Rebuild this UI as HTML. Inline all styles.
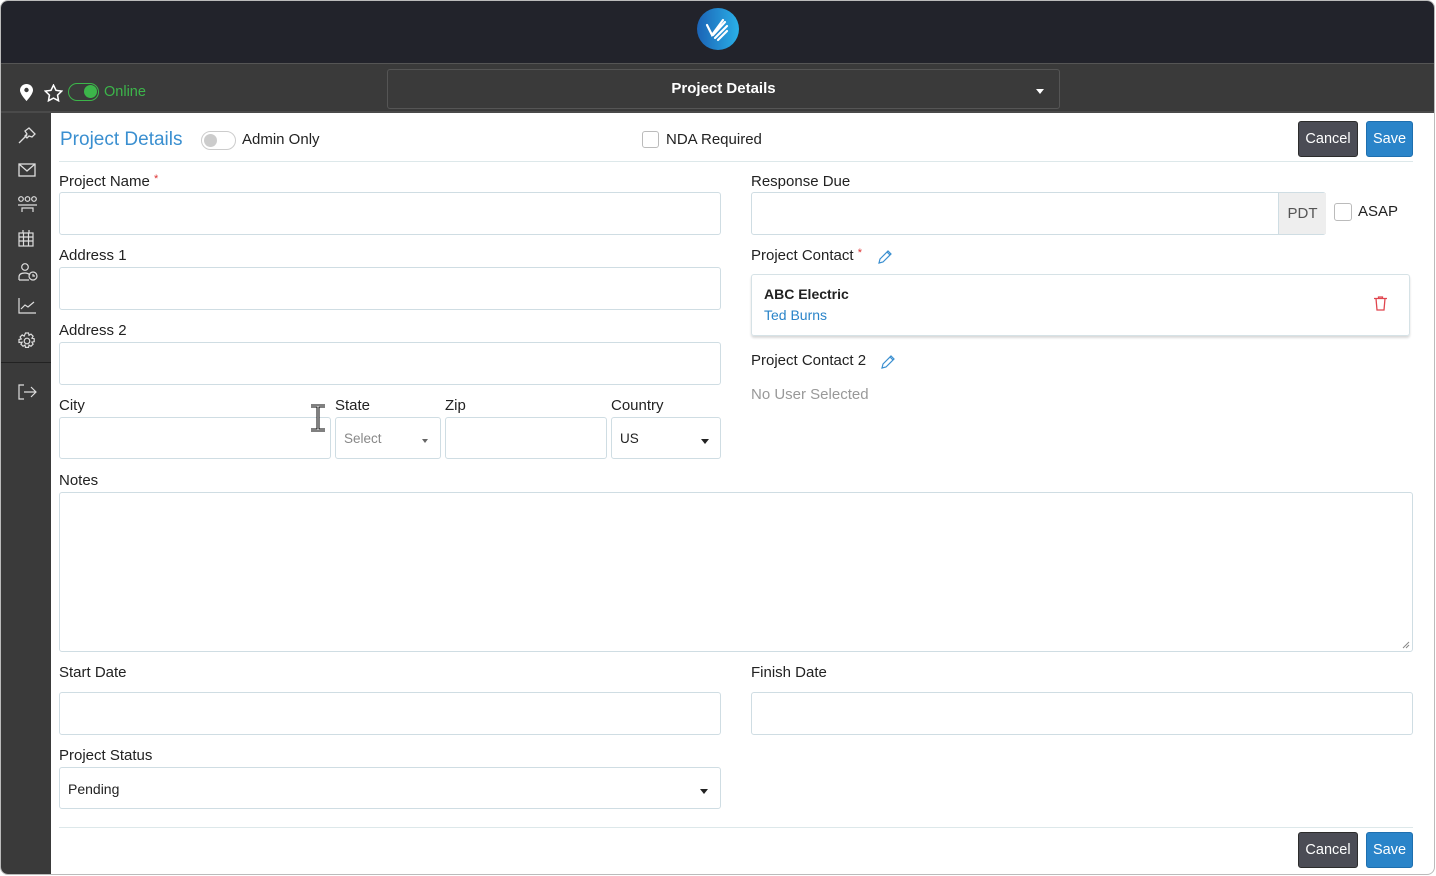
<!DOCTYPE html>
<html><head><style>
*{box-sizing:border-box;margin:0;padding:0}
body{width:1436px;height:876px;background:#fff;font-family:"Liberation Sans",sans-serif;color:#222;position:relative;overflow:hidden}
.frame{position:absolute;left:0;top:0;width:1435px;height:875px;border-radius:8px;overflow:hidden;background:#fff;border:1px solid #bbb}
.top{position:absolute;left:0;top:0;right:0;height:62px;background:#22232b}
.bar{position:absolute;left:0;top:62px;right:0;height:50px;background:#3a3a3a;border-top:1px solid #555;border-bottom:2px solid #4a4a4a}
.side{position:absolute;left:0;top:112px;width:50px;bottom:0;background:#3a3a3a}
.a{position:absolute}
.lbl{position:absolute;font-size:15px;color:#222}
.in{position:absolute;border:1px solid #cfdde3;border-radius:3px;background:#fff}
.btn{position:absolute;height:36px;border-radius:3px;color:#fff;font-size:14.5px;display:flex;align-items:center;justify-content:center}
.cancel{background:#4b4c55;border:1px solid #2c2c2c}
.save{background:#2a84c9;border:1px solid #1e6faf}
.caret{position:absolute;width:0;height:0;border-left:4px solid transparent;border-right:4px solid transparent;border-top:5px solid #222}
.ic{position:absolute;left:17px}
</style></head><body>
<div class="frame">
<div class="top">
<svg class="a" style="left:695px;top:6px" width="44" height="44" viewBox="0 0 44 44"><defs><linearGradient id="g" x1="0" x2="1"><stop offset="0" stop-color="#1b63b5"/><stop offset="1" stop-color="#2ab0e8"/></linearGradient></defs><circle cx="22" cy="22" r="21" fill="url(#g)"/><path d="M11 18l5 10 11-15M17 28l12-13M19 31l12-12M22 33l9-9" stroke="#fff" stroke-width="2.2" fill="none" stroke-linecap="round"/></svg>
</div>
<div class="bar">
<svg class="a" style="left:19px;top:20px" width="13" height="17" viewBox="0 0 13 17"><path d="M6.5 0C3 0 0 2.7 0 6.2 0 10 6.5 17 6.5 17S13 10 13 6.2C13 2.7 10 0 6.5 0z" fill="#fff"/><circle cx="6.5" cy="6" r="2.2" fill="#3a3a3a"/></svg>
<svg class="a" style="left:43px;top:20px" width="19" height="18" viewBox="0 0 24 23"><path d="M12 1.5l3.2 6.6 7.2 1-5.2 5.1 1.2 7.2L12 18l-6.4 3.4 1.2-7.2L1.6 9.1l7.2-1z" fill="none" stroke="#fff" stroke-width="2"/></svg>
<div class="a" style="left:67px;top:19px;width:31px;height:18px;border:1.5px solid #3cb54a;border-radius:9px"><div class="a" style="right:1px;top:1px;width:13px;height:13px;border-radius:50%;background:#3cb54a"></div></div>
<div class="a" style="left:103px;top:20px;color:#3cb54a;font-size:14.5px">Online</div>
<div class="a" style="left:386px;top:5px;width:673px;height:40px;border:1px solid #555;border-radius:3px;background:#3a3a3a;color:#fff;font-size:15px;font-weight:bold;text-align:center;line-height:38px">Project Details<div class="caret" style="right:15px;top:19px;border-top-color:#fff"></div></div>
</div>
<div class="side">
<svg class="ic" style="top:14px" width="18" height="18" viewBox="0 0 18 18" fill="none" stroke="#ddd" stroke-width="1.3"><path d="M1 16l8-8M7 4l4-3 6 6-3 3-3-1-2 2-2-2 2-2z"/></svg>
<svg class="ic" style="top:50px" width="18" height="14" viewBox="0 0 18 14" fill="none" stroke="#ddd" stroke-width="1.3"><rect x="1" y="1" width="16" height="12"/><path d="M1 1l8 7 8-7"/></svg>
<svg class="ic" style="left:16px;top:82px" width="21" height="18" viewBox="0 0 21 18" fill="none" stroke="#ddd" stroke-width="1.2"><circle cx="4" cy="4" r="2.3"/><circle cx="10.5" cy="4" r="2.3"/><circle cx="17" cy="4" r="2.3"/><path d="M1 10h19M5 17v-4h11v4"/></svg>
<svg class="ic" style="top:117px" width="16" height="17" viewBox="0 0 16 17" fill="none" stroke="#ddd" stroke-width="1.2"><rect x="1" y="3" width="14" height="13"/><path d="M1 7h14M1 11h14M5.5 3v13M10.5 3v13M5 0v3M11 0v3"/></svg>
<svg class="ic" style="top:150px" width="20" height="18" viewBox="0 0 20 18" fill="none" stroke="#ddd" stroke-width="1.2"><circle cx="7" cy="4" r="3.3"/><path d="M1 17v-3c0-3 3-4 6-4s4 1 5 2M1 17h10"/><circle cx="15" cy="13" r="4"/><path d="M15 11v2h2"/></svg>
<svg class="ic" style="top:185px" width="18" height="16" viewBox="0 0 18 16" fill="none" stroke="#ddd" stroke-width="1.2"><path d="M1 0v15h17M3 11l4-4 3 2 6-5"/></svg>
<svg class="ic" style="top:219px" width="18" height="18" viewBox="0 0 18 18" fill="none" stroke="#ddd" stroke-width="1.2"><circle cx="9" cy="9" r="2.8"/><path d="M7.5 1h3l.5 2.3 2-1.2 2.1 2.1-1.2 2 2.3.5v3l-2.3.5 1.2 2-2.1 2.1-2-1.2-.5 2.3h-3l-.5-2.3-2 1.2-2.1-2.1 1.2-2L1 10.5v-3l2.3-.5-1.2-2 2.1-2.1 2 1.2z"/></svg>
<div class="a" style="left:0;top:249px;width:50px;height:1px;background:#222"></div>
<svg class="ic" style="top:271px" width="19" height="16" viewBox="0 0 19 16" fill="none" stroke="#ddd" stroke-width="1.2"><path d="M6 1H1v14h5M6 8h12M13 3l5 5-5 5"/></svg>
</div>

<div class="a" style="left:59px;top:128px;font-size:19px;color:#3a8fd0">Project Details</div>
<div class="a" style="left:200px;top:130px;width:35px;height:19px;border:1px solid #ccc;border-radius:10px"><div class="a" style="left:2px;top:2px;width:13px;height:13px;border-radius:50%;background:#ccc"></div></div>
<div class="lbl" style="left:241px;top:130px">Admin Only</div>
<div class="a" style="left:641px;top:130px;width:17px;height:17px;border:1px solid #bbb;border-radius:3px"></div>
<div class="lbl" style="left:665px;top:130px">NDA Required</div>
<div class="btn cancel" style="left:1297px;top:120px;width:60px">Cancel</div>
<div class="btn save" style="left:1365px;top:120px;width:47px">Save</div>
<div class="a" style="left:58px;top:160px;width:1354px;height:1px;background:#dde8ea"></div>

<div class="lbl" style="left:58px;top:172px">Project Name <span style="color:#d33;font-size:11px;vertical-align:top">*</span></div>
<div class="in" style="left:58px;top:191px;width:662px;height:43px"></div>
<div class="lbl" style="left:58px;top:246px">Address 1</div>
<div class="in" style="left:58px;top:266px;width:662px;height:43px"></div>
<div class="lbl" style="left:58px;top:321px">Address 2</div>
<div class="in" style="left:58px;top:341px;width:662px;height:43px"></div>
<div class="lbl" style="left:58px;top:396px">City</div>
<div class="lbl" style="left:334px;top:396px">State</div>
<div class="lbl" style="left:444px;top:396px">Zip</div>
<div class="lbl" style="left:610px;top:396px">Country</div>
<div class="in" style="left:58px;top:416px;width:272px;height:42px"></div>
<div class="in" style="left:334px;top:416px;width:106px;height:42px"><span class="a" style="left:8px;top:13px;font-size:13.5px;color:#888">Select</span><div class="caret" style="left:86px;top:21px;border-top-color:#666;border-width:4px 3.5px 0"></div></div>
<div class="in" style="left:444px;top:416px;width:162px;height:42px"></div>
<div class="in" style="left:610px;top:416px;width:110px;height:42px"><span class="a" style="left:8px;top:13px;font-size:13.5px;color:#222">US</span><div class="caret" style="left:89px;top:21px"></div></div>
<svg class="a" style="left:308px;top:403px" width="18" height="28" viewBox="0 0 18 28"><path d="M2 2h14M2 26h14M9 2v24" stroke="#000" stroke-width="3"/><path d="M2 2h14M2 26h14M9 2v24" stroke="#fff" stroke-width="1"/></svg>
<div class="lbl" style="left:58px;top:471px">Notes</div>
<div class="in" style="left:58px;top:491px;width:1354px;height:160px"><svg class="a" style="right:2px;bottom:2px" width="8" height="8"><path d="M1 7l6-6M4 7l3-3" stroke="#888"/></svg></div>
<div class="lbl" style="left:58px;top:663px">Start Date</div>
<div class="in" style="left:58px;top:691px;width:662px;height:43px"></div>
<div class="lbl" style="left:58px;top:746px">Project Status</div>
<div class="in" style="left:58px;top:766px;width:662px;height:42px"><span class="a" style="left:8px;top:13px;font-size:14px">Pending</span><div class="caret" style="left:640px;top:21px"></div></div>
<div class="lbl" style="left:750px;top:663px">Finish Date</div>
<div class="in" style="left:750px;top:691px;width:662px;height:43px"></div>

<div class="lbl" style="left:750px;top:172px">Response Due</div>
<div class="in" style="left:750px;top:191px;width:575px;height:43px"><div class="a" style="left:526px;top:0;width:48px;height:41px;background:#eee;border-left:1px solid #cfdde3;font-size:15px;color:#555;text-align:center;line-height:42px">PDT</div></div>
<div class="a" style="left:1333px;top:202px;width:18px;height:18px;border:1px solid #bbb;border-radius:3px"></div>
<div class="lbl" style="left:1357px;top:202px">ASAP</div>
<div class="lbl" style="left:750px;top:246px">Project Contact <span style="color:#d33;font-size:11px;vertical-align:top">*</span></div>
<svg class="a" style="left:877px;top:248px" width="15" height="15" viewBox="0 0 15 15" fill="none" stroke="#3a8fd0" stroke-width="1.2"><path d="M1 14l1-4 8-8 3 3-8 8zM9 3l3 3"/></svg>
<div class="a" style="left:750px;top:273px;width:659px;height:62px;border:1px solid #d6e2e6;border-radius:3px;box-shadow:0 2px 2px rgba(0,0,0,.15)"></div>
<div class="a" style="left:763px;top:285px;font-size:14px;font-weight:bold">ABC Electric</div>
<div class="a" style="left:763px;top:306px;font-size:14px;color:#2a84c9">Ted Burns</div>
<svg class="a" style="left:1373px;top:295px" width="13" height="15" viewBox="0 0 13 15" fill="none" stroke="#e0454e" stroke-width="1.3"><path d="M0 2.5h13M4.5 2.5V1h4v1.5M2 2.5l1 11.5h7l1-11.5"/></svg>
<div class="lbl" style="left:750px;top:351px">Project Contact 2</div>
<svg class="a" style="left:880px;top:353px" width="15" height="15" viewBox="0 0 15 15" fill="none" stroke="#3a8fd0" stroke-width="1.2"><path d="M1 14l1-4 8-8 3 3-8 8zM9 3l3 3"/></svg>
<div class="lbl" style="left:750px;top:385px;color:#999">No User Selected</div>

<div class="a" style="left:58px;top:826px;width:1354px;height:1px;background:#dde8ea"></div>
<div class="btn cancel" style="left:1297px;top:831px;width:60px">Cancel</div>
<div class="btn save" style="left:1365px;top:831px;width:47px">Save</div>
</div>
</body></html>
